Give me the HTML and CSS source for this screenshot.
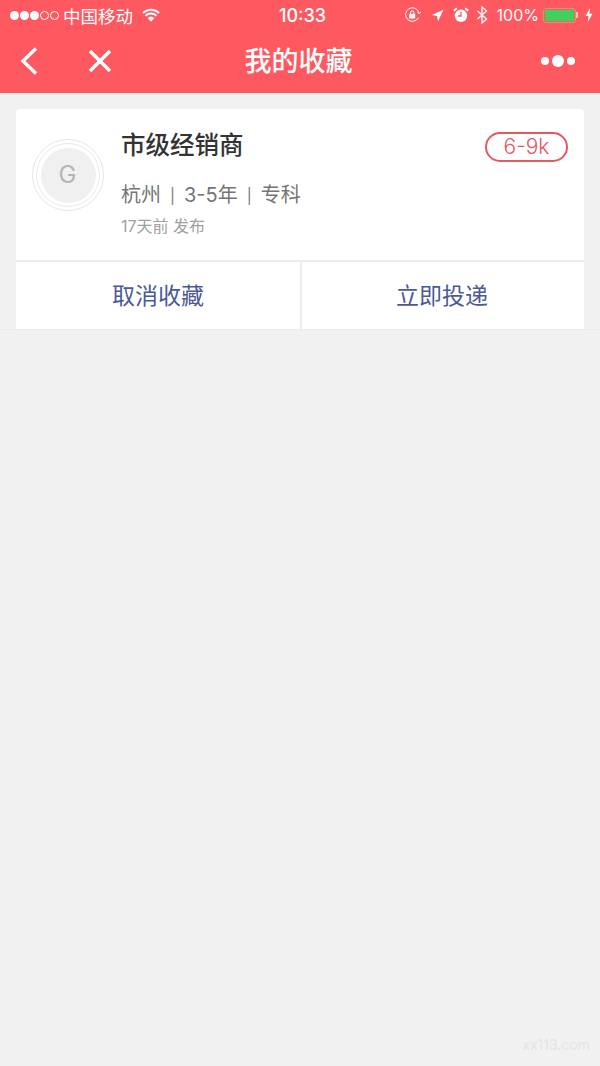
FILE: index.html
```html
<!DOCTYPE html>
<html lang="zh-CN">
<head>
  <meta charset="UTF-8" />
  <meta name="viewport" content="width=device-width, initial-scale=1.0" />
  <title>我的收藏</title>
  <link rel="stylesheet" href="styles.css">
</head>
<body>
  <header class="top">
    <div class="status">
      <div class="status-left">
        <span class="signal">
          <i class="dot"></i><i class="dot"></i><i class="dot"></i><i class="dot off"></i><i class="dot off"></i>
        </span>
        <span class="carrier">中国移动</span>
        <svg class="wifi" width="18" height="14" viewBox="0 0 18 14">
          <path d="M1 5a11.500 11.500 0 0 1 16 0M3.600 7.700a7.800 7.800 0 0 1 10.800 0" fill="none" stroke="#fff" stroke-width="2"/>
          <path d="M9 13.800l-3.300-3.700a4.800 4.800 0 0 1 6.600 0z" fill="#fff"/>
        </svg>
      </div>
      <div class="clock">10:33</div>
      <div class="status-right">
        <svg width="17" height="16" viewBox="0 0 17 16">
          <path d="M14.500 10.500A6.800 6.800 0 1 1 15 6" fill="none" stroke="#fff" stroke-width="1"/>
          <path d="M13.300 5l2 1.600L16.800 5" fill="none" stroke="#fff" stroke-width="1"/>
          <rect x="5.200" y="6.800" width="6" height="4.600" rx="0.600" fill="#fff"/>
          <path d="M6.500 7V5.600a1.700 1.700 0 0 1 3.400 0V7" fill="none" stroke="#fff" stroke-width="1"/>
        </svg>
        <svg class="arrow" width="13" height="13" viewBox="0 0 13 13">
          <path d="M12.500 .8L7 12.300 6 7 .8 6z" fill="#fff"/>
        </svg>
        <svg class="alarm" width="16" height="16" viewBox="0 0 16 16">
          <circle cx="8" cy="8.800" r="6.200" fill="#fff"/>
          <path d="M8 5v4H5" fill="none" stroke="#fe5960" stroke-width="1.300"/>
          <path d="M.8 3.800L3.800 1.200M15.200 3.800L12.200 1.200" stroke="#fff" stroke-width="2"/>
        </svg>
        <svg class="bt" width="12" height="18" viewBox="0 0 12 18">
          <path d="M1.500 5l9 8-4.500 4V1l4.500 4-9 8" fill="none" stroke="#fff" stroke-width="1.300"/>
        </svg>
        <span class="percent">100%</span>
        <span class="battery"><i class="battery-fill"></i></span>
        <svg class="bolt" width="8" height="14" viewBox="0 0 8 14">
          <path d="M5 0L.5 8h3L2.800 14 7.500 5.800h-3z" fill="#fff"/>
        </svg>
      </div>
    </div>
    <nav class="nav">
      <div class="nav-left">
        <svg width="20" height="30" viewBox="0 0 20 30">
          <path d="M17 2.500L4 15l13 12.500" fill="none" stroke="#fff" stroke-width="3.400"/>
        </svg>
        <svg class="close" width="24" height="24" viewBox="0 0 24 24">
          <path d="M2 2l20 20M22 2L2 22" fill="none" stroke="#fff" stroke-width="3.400"/>
        </svg>
      </div>
      <h1 class="title">我的收藏</h1>
      <div class="more"><i></i><i class="big"></i><i></i></div>
    </nav>
  </header>

  <main class="list">
    <section class="card">
      <div class="card-body">
        <div class="logo"><div class="logo-inner">G</div></div>
        <div class="info">
          <div class="head">
            <h2 class="job">市级经销商</h2>
            <span class="salary">6-9k</span>
          </div>
          <p class="meta">杭州<span class="sep">|</span>3-5年<span class="sep">|</span>专科</p>
          <p class="time">17天前 发布</p>
        </div>
      </div>
      <div class="actions">
        <a class="action">取消收藏</a>
        <a class="action">立即投递</a>
      </div>
    </section>
  </main>

  <div class="mark">xx113.com</div>
</body>
</html>
```

FILE: styles.css
```css
html,
body {
  height: 100%;
}

body {
  margin: 0;
  background-color: #f1f1f1;
  font-family: Inter, "Noto Sans CJK SC", sans-serif;
  color: #333;
  overflow: hidden;
}

.top {
  background-color: #fe5960;
  color: #fff;
  height: 93px;
}

/* status bar */
.status {
  height: 30px;
  display: flex;
  align-items: center;
  justify-content: space-between;
  position: relative;
  padding: 0 7px 0 10px;
  font-size: 16px;
}

.status-left,
.status-right {
  display: flex;
  align-items: center;
}

.signal {
  display: flex;
  gap: 1px;
}

.dot {
  width: 9px;
  height: 9px;
  border-radius: 50%;
  background-color: #fff;
  box-sizing: border-box;
}

.dot.off {
  background: none;
  border: 1px solid #fff;
}

.carrier {
  margin-left: 4px;
  font-size: 17.500px;
}

.wifi {
  margin-left: 9px;
}

.clock {
  position: absolute;
  left: 0;
  right: 0;
  text-align: center;
  font-size: 18px;
  font-weight: 500;
  padding-left: 5px;
}

.arrow {
  margin-left: 10px;
}

.alarm {
  margin-left: 9px;
}

.bt {
  margin-left: 7px;
}

.percent {
  margin-left: 9px;
  font-size: 16px;
}

.battery {
  margin-left: 4px;
  width: 33px;
  height: 15px;
  box-sizing: border-box;
  border: 1px solid #bfa074;
  border-radius: 3px;
  padding: 1px;
  display: flex;
  position: relative;
}

/* battery terminal */
.battery::after {
  content: "";
  position: absolute;
  right: -3px;
  top: 3px;
  width: 2px;
  height: 6px;
  background-color: #e8c9b0;
}

.battery-fill {
  flex: 1;
  background-color: #41d15a;
  border-radius: 1px;
}

.bolt {
  margin-left: 9px;
}

/* title row */
.nav {
  height: 63px;
  display: flex;
  align-items: center;
  justify-content: space-between;
  position: relative;
  padding: 0 25px 2px 19px;
  box-sizing: border-box;
}

.nav-left {
  display: flex;
  align-items: center;
}

.close {
  margin-left: 49px;
}

.title {
  position: absolute;
  left: 0;
  right: 3px;
  margin: 0 0 3px;
  text-align: center;
  font-size: 27px;
  font-weight: 500;
}

.more {
  display: flex;
  align-items: center;
  gap: 3px;
}

.more i {
  width: 8px;
  height: 8px;
  border-radius: 50%;
  background-color: #fff;
}

.more i.big {
  width: 12px;
  height: 12px;
}

/* favourites */
.list {
  padding: 16px 16px 0;
  border-bottom: 1px solid #ebebeb;
}

.card {
  background-color: #fff;
  border-radius: 4px 4px 0 0;
  height: 220px;
  display: flex;
  flex-direction: column;
}

.card-body {
  height: 153px;
  display: flex;
  padding: 20px 16px 0;
  box-sizing: border-box;
  border-bottom: 2px solid #ececec;
}

.logo {
  width: 72px;
  height: 72px;
  margin-top: 10px;
  flex: none;
  box-sizing: border-box;
  border: 1.500px solid #e6e6e6;
  border-radius: 50%;
  padding: 2.500px;
}

.logo-inner {
  width: 64px;
  height: 64px;
  box-sizing: border-box;
  border: 1.500px solid #e9e9e9;
  padding: 3.500px;
  background-color: #f0f0f0;
  background-clip: content-box;
  border-radius: 50%;
  display: flex;
  align-items: center;
  justify-content: center;
  font-size: 24px;
  color: #b5b5b5;
}

.info {
  flex: 1;
  margin-left: 17px;
}

.head {
  display: flex;
  justify-content: space-between;
  align-items: flex-start;
}

.job {
  margin: 0;
  font-size: 24.500px;
  line-height: 32px;
  font-weight: 500;
  color: #333;
}

.salary {
  margin-top: 3px;
  width: 83px;
  height: 30px;
  box-sizing: border-box;
  border: 2px solid #e2595f;
  border-radius: 15px;
  text-align: center;
  font-size: 21px;
  line-height: 26px;
  font-weight: 300;
  color: #e2595f;
}

.meta {
  margin: 18px 0 0;
  font-size: 20px;
  line-height: 30px;
  color: #757575;
}

.sep {
  margin: 0 9px;
  font-size: 15px;
  position: relative;
  top: -1px;
}

.time {
  margin: 2px 0 0;
  font-size: 16px;
  line-height: 24px;
  color: #a0a0a0;
}

.actions {
  flex: 1;
  display: flex;
}

.action {
  width: 50%;
  box-sizing: border-box;
  display: flex;
  align-items: center;
  justify-content: center;
  padding-bottom: 3px;
  font-size: 23px;
  color: #4b5a97;
}

.action + .action {
  border-left: 2px solid #ececec;
  padding-right: 2px;
}

.mark {
  position: absolute;
  right: 10px;
  bottom: 13px;
  font-size: 14px;
  color: #e4e4e4;
}
```
